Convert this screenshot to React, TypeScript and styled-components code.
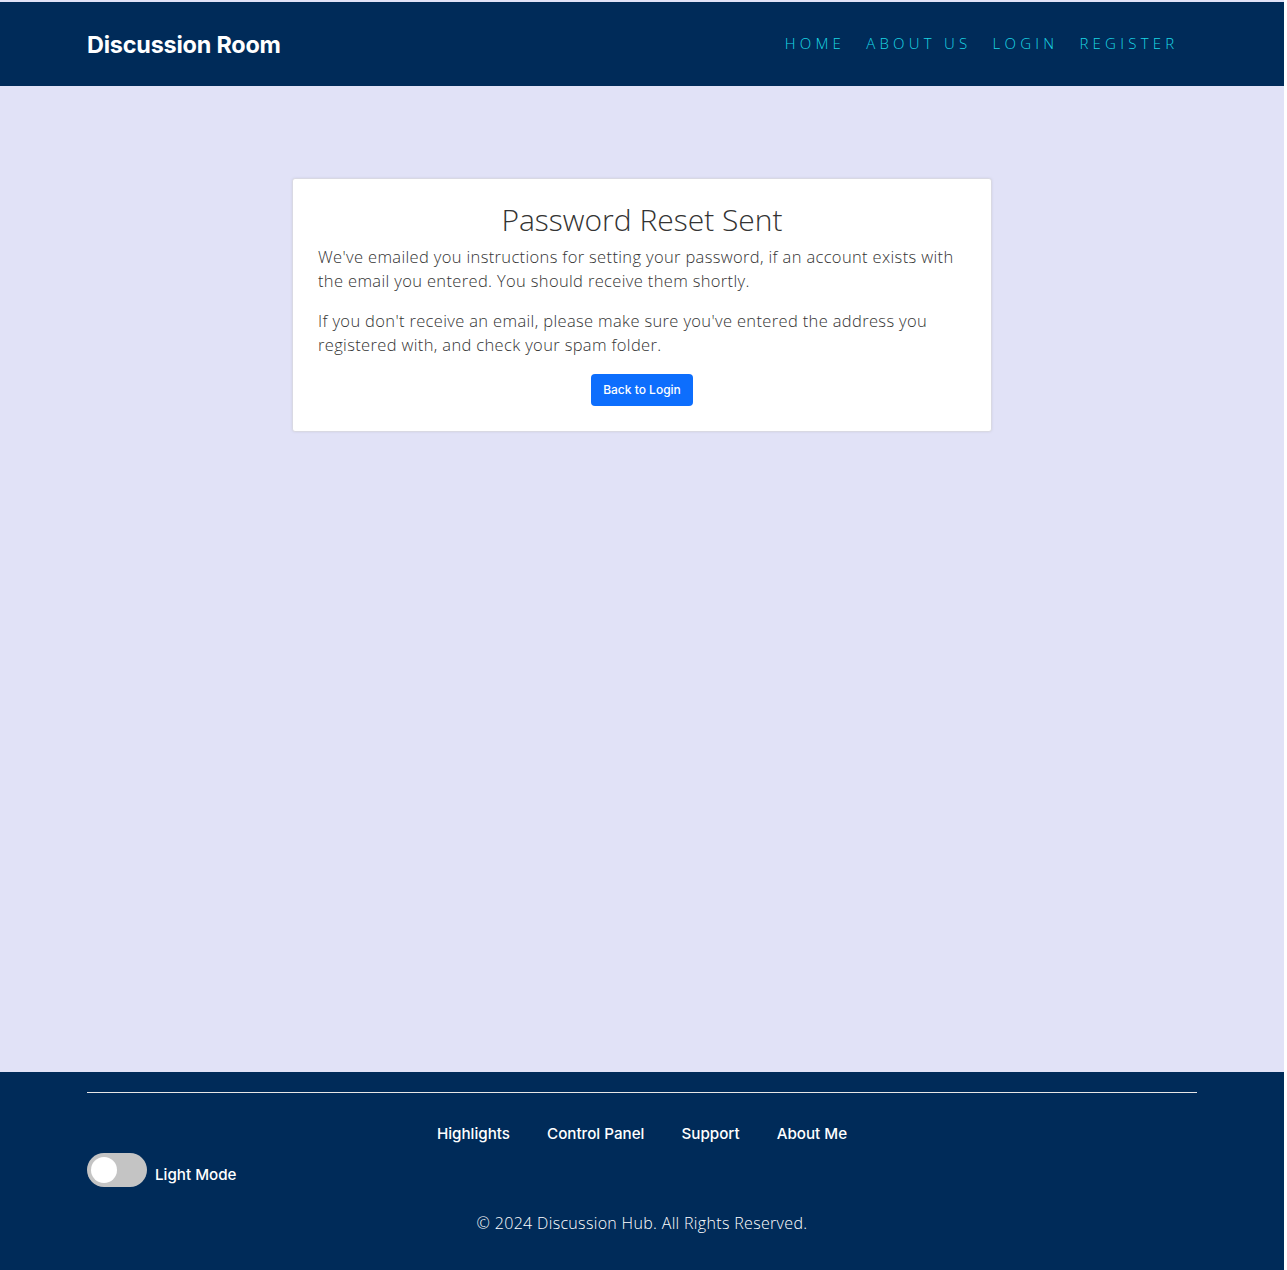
import React from "react";
import styled, { createGlobalStyle } from "styled-components";

const Global = createGlobalStyle`
  html, body { margin: 0; padding: 0; background: #ffffff; }
  body { font-family: "Open Sans", "Liberation Sans", sans-serif; }
  * { box-sizing: border-box; }
`;

const Page = styled.div`
  min-height: 1270px;
  padding-top: 2px;
  display: flex;
  flex-direction: column;
  background: #e1e2f7;
  width: 1284px;
`;

const NavBar = styled.nav`
  background: #002b59;
  height: 84px;
`;

const Container = styled.div`
  width: 1140px;
  padding: 0 15px;
  margin: 0 auto;
`;

const NavInner = styled(Container)`
  height: 100%;
  display: flex;
  align-items: center;
  justify-content: space-between;
`;

const Brand = styled.a`
  font-family: Inter, "Liberation Sans", sans-serif;
  font-weight: 700;
  font-size: 23.4px;
  color: #ffffff;
  letter-spacing: -0.2px;
  text-decoration: none;
`;

const NavLinks = styled.ul`
  list-style: none;
  margin: -2px 8px 0 0;
  padding: 0;
  display: flex;
`;

const NavLink = styled.a`
  display: block;
  padding: 8px 10.5px;
  font-family: "Open Sans", sans-serif;
  font-weight: 300;
  font-size: 15px;
  letter-spacing: 4.25px;
  color: #1ad6e4;
  text-decoration: none;
`;

const Main = styled.main`
  flex: 1;
  padding-top: 92px;
`;

const Card = styled.div`
  width: 700px;
  margin: 0 auto;
  background: #ffffff;
  border: 1px solid #d9d9e3;
  border-radius: 3px;
  box-shadow: 0 0 3px rgba(0, 0, 0, 0.08);
  padding: 22px 25px 25px;
  display: flex;
  flex-direction: column;
  align-items: center;
`;

const Title = styled.h2`
  margin: 0 0 6px;
  font-family: "Open Sans", sans-serif;
  font-weight: 300;
  font-size: 30px;
  line-height: 38px;
  color: #333333;
`;

const Text = styled.p`
  margin: 0 0 16px;
  align-self: stretch;
  font-family: "Open Sans", sans-serif;
  font-weight: 300;
  font-size: 16.5px;
  letter-spacing: 0.35px;
  line-height: 24px;
  color: #333333;
`;

const Button = styled.a`
  display: inline-block;
  margin-top: 1px;
  background: #0d6efd;
  color: #ffffff;
  font-family: Inter, "Liberation Sans", sans-serif;
  font-size: 12px;
  font-weight: 500;
  line-height: 20px;
  padding: 6px 12px;
  border-radius: 4px;
  text-decoration: none;
`;

const Footer = styled.footer`
  background: #002b59;
  height: 198px;
  padding-top: 20px;
`;

const Rule = styled.hr`
  margin: 0;
  border: 0;
  border-top: 1px solid #e6e6e6;
`;

const FooterLinks = styled.div`
  display: flex;
  justify-content: center;
  gap: 37px;
  margin-top: 31px;
`;

const FooterLink = styled.a`
  font-family: Inter, "Liberation Sans", sans-serif;
  font-weight: 500;
  font-size: 15.2px;
  line-height: 20px;
  color: #ffffff;
  text-decoration: none;
`;

const ToggleRow = styled.div`
  display: flex;
  align-items: center;
  gap: 8px;
  margin-top: 9px;
`;

const Switch = styled.span<{ on?: boolean }>`
  position: relative;
  width: 60px;
  height: 34px;
  border-radius: 17px;
  background: ${(p) => (p.on ? "#2196f3" : "#c4c4c4")};
  &::after {
    content: "";
    position: absolute;
    top: 4px;
    left: ${(p) => (p.on ? "30px" : "4px")};
    width: 26px;
    height: 26px;
    border-radius: 50%;
    background: #ffffff;
  }
`;

const ToggleLabel = styled.span`
  margin-top: 8px;
  font-family: Inter, "Liberation Sans", sans-serif;
  font-weight: 500;
  font-size: 15.2px;
  color: #ffffff;
`;

const Copyright = styled.p`
  margin: 24px 0 0;
  text-align: center;
  font-family: "Open Sans", sans-serif;
  font-weight: 300;
  font-size: 16px;
  letter-spacing: 0.33px;
  line-height: 24px;
  color: #ffffff;
`;

export default function App() {
  return (
    <>
      <Global />
      <Page>
        <NavBar>
          <NavInner>
            <Brand href="#">Discussion Room</Brand>
            <NavLinks>
              {["HOME", "ABOUT US", "LOGIN", "REGISTER"].map((l) => (
                <li key={l}>
                  <NavLink href="#">{l}</NavLink>
                </li>
              ))}
            </NavLinks>
          </NavInner>
        </NavBar>
        <Main>
          <Card>
            <Title>Password Reset Sent</Title>
            <Text>
              We've emailed you instructions for setting your password, if an account exists with
              the email you entered. You should receive them shortly.
            </Text>
            <Text>
              If you don't receive an email, please make sure you've entered the address you
              registered with, and check your spam folder.
            </Text>
            <Button href="#">Back to Login</Button>
          </Card>
        </Main>
        <Footer>
          <Container>
            <Rule />
            <FooterLinks>
              {["Highlights", "Control Panel", "Support", "About Me"].map((l) => (
                <FooterLink key={l} href="#">
                  {l}
                </FooterLink>
              ))}
            </FooterLinks>
            <ToggleRow>
              <Switch />
              <ToggleLabel>Light Mode</ToggleLabel>
            </ToggleRow>
            <Copyright>© 2024 Discussion Hub. All Rights Reserved.</Copyright>
          </Container>
        </Footer>
      </Page>
    </>
  );
}
